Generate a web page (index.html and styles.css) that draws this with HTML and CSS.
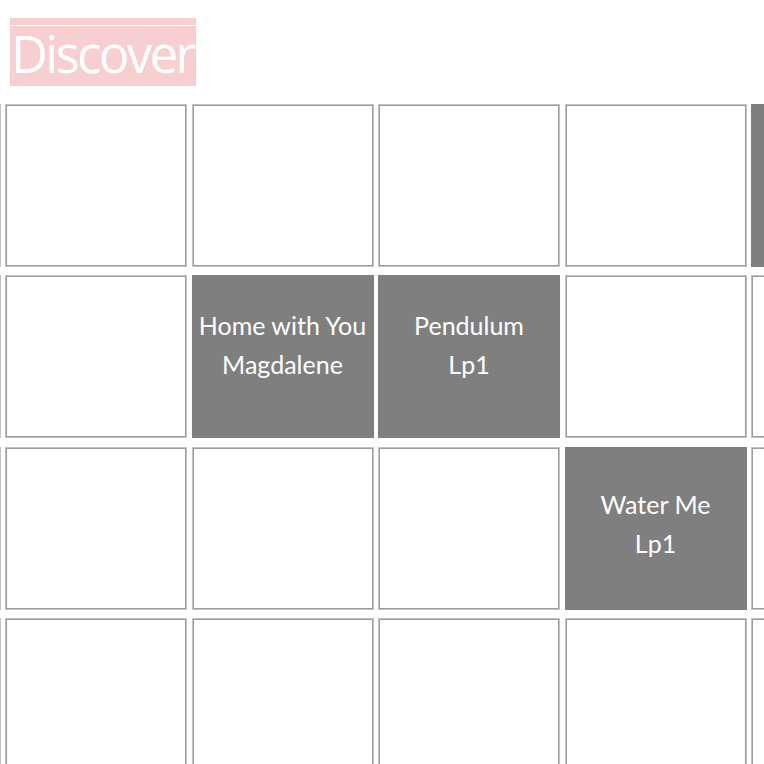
FILE: index.html
```html
<!DOCTYPE html>
<html lang="en">
<head>
<meta charset="utf-8">
<title>Discover</title>
<link rel="stylesheet" href="styles.css">
</head>
<body>
  <header class="page-header">
    <div class="title-wrap">
      <h1 class="title">Discover</h1>
    </div>
  </header>

  <main class="board">
    <!-- row 1 -->
    <div class="tile"></div>
    <div class="tile"></div>
    <div class="tile"></div>
    <div class="tile"></div>
    <div class="tile"></div>
    <div class="tile tile--filled"></div>

    <!-- row 2 -->
    <div class="tile"></div>
    <div class="tile"></div>
    <div class="tile tile--filled"><span class="tile-label">Home with You<br>Magdalene</span></div>
    <div class="tile tile--filled"><span class="tile-label">Pendulum<br>Lp1</span></div>
    <div class="tile"></div>
    <div class="tile"></div>

    <!-- row 3 -->
    <div class="tile"></div>
    <div class="tile"></div>
    <div class="tile"></div>
    <div class="tile"></div>
    <div class="tile tile--filled"><span class="tile-label tile-label--low">Water Me<br>Lp1</span></div>
    <div class="tile"></div>

    <!-- row 4 -->
    <div class="tile"></div>
    <div class="tile"></div>
    <div class="tile"></div>
    <div class="tile"></div>
    <div class="tile"></div>
    <div class="tile"></div>
  </main>
</body>
</html>
```
FILE: styles.css
```css
html, body {
  margin: 0;
  padding: 0;
  background: #ffffff;
  overflow: hidden;
  height: 100%;
}

body {
  font-family: "Open Sans", "Liberation Sans", sans-serif;
}

.page-header {
  padding: 18px 0 0 10px;
  height: 68px;
}

.title-wrap {
  display: inline-block;
  border-top: 7px solid #f7cfd0;
  padding-top: 1px;
}

.title {
  margin: 0;
  background: #f7cfd0;
  color: #ffffff;
  font-family: "Open Sans", "Liberation Sans", sans-serif;
  font-weight: 400;
  font-size: 51px;
  line-height: 54px;
  height: 60px;
  box-sizing: border-box;
  letter-spacing: -2.7px;
  padding: 0 2px 0 1px;
}

.board {
  display: grid;
  grid-template-columns: repeat(6, 182px);
  grid-auto-rows: 163px;
  column-gap: 4.5px;
  row-gap: 8.4px;
  margin: 18px 0 0 -181.5px;
  width: 1200px;
}

.tile {
  box-sizing: border-box;
  border: 1px solid #c2c2c2;
  box-shadow: inset 0 0 0 1px #9c9c9c;
  background: #ffffff;
  display: flex;
  align-items: center;
  justify-content: center;
}

.tile--filled {
  background: #7f7f7f;
  border-color: #7f7f7f;
  box-shadow: none;
}

.tile-label {
  color: #ffffff;
  font-family: "Lato", "DejaVu Sans", sans-serif;
  font-weight: 400;
  font-size: 25px;
  line-height: 39px;
  text-align: center;
  white-space: nowrap;
  margin-bottom: 24px;
}

.tile-label--low {
  margin-bottom: 8px;
}
```
